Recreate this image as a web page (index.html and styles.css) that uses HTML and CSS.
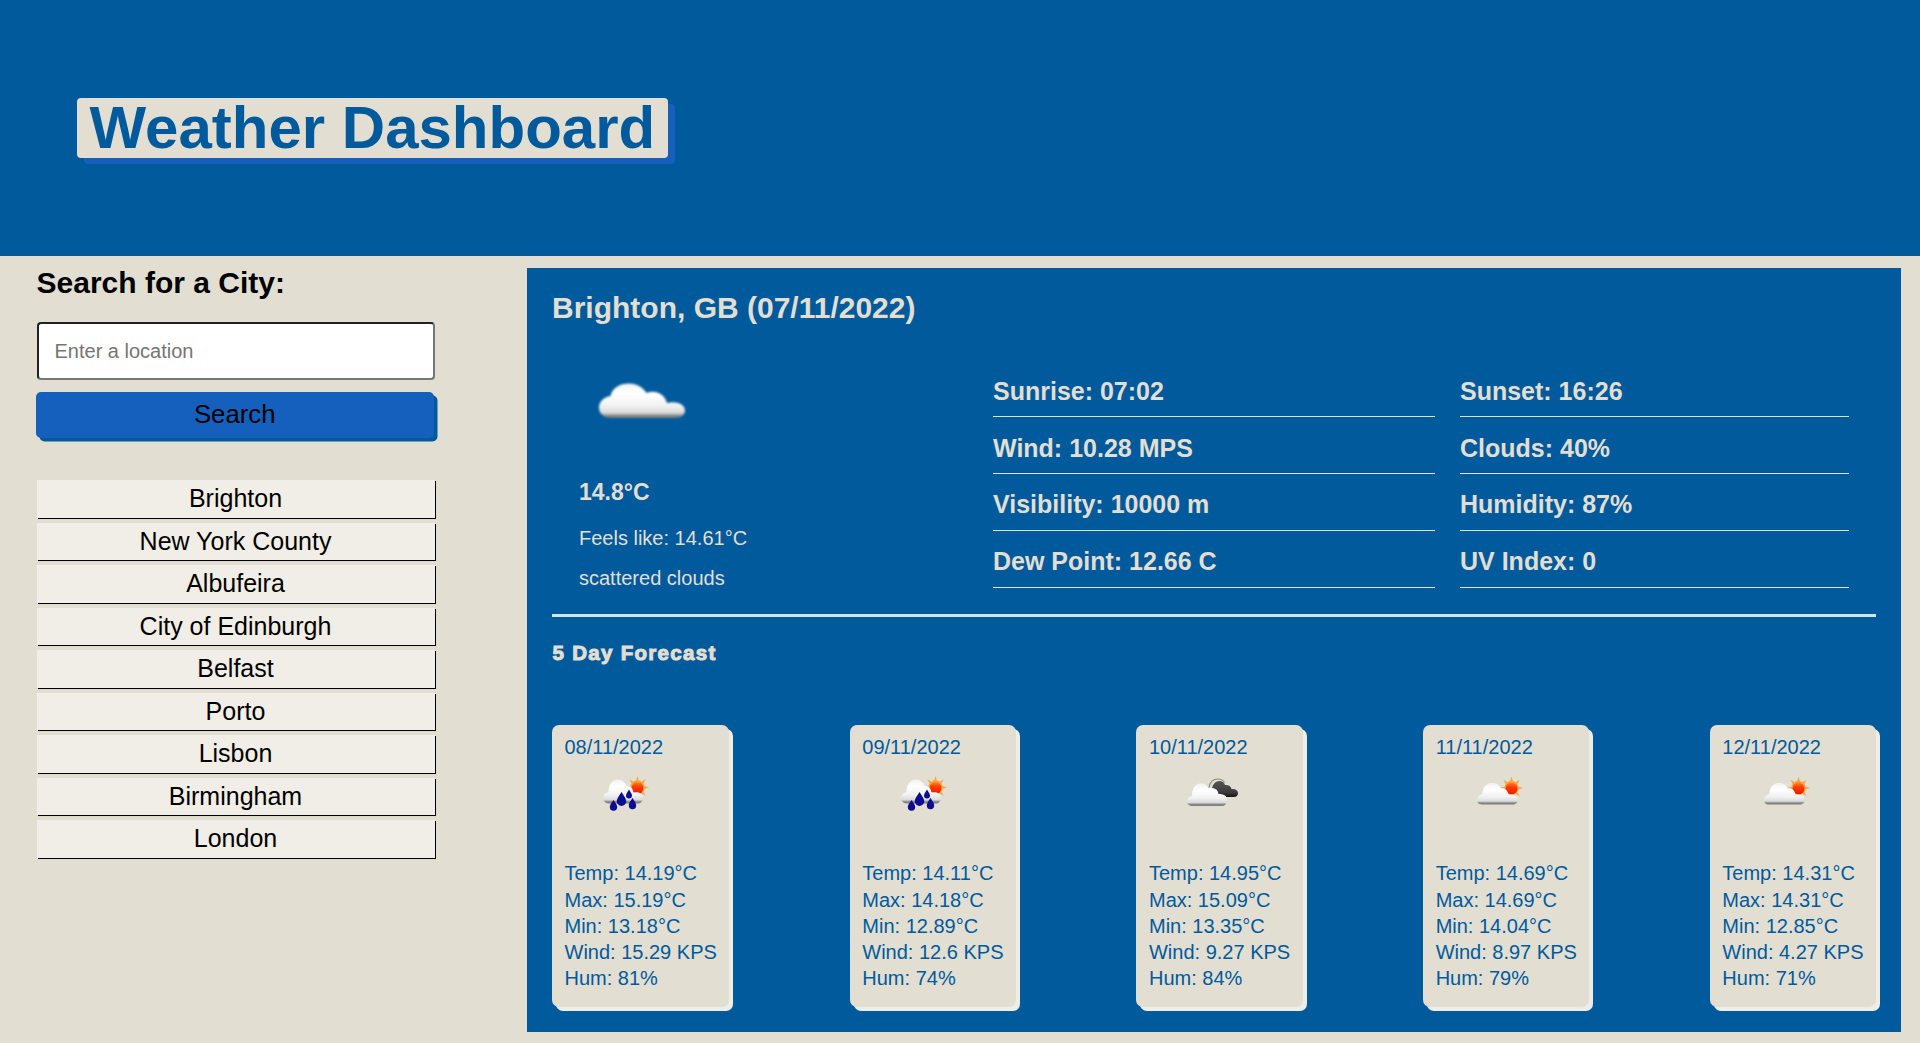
FILE: index.html
```html
<!DOCTYPE html>
<html lang="en">
<head>
<meta charset="utf-8">
<title>Weather Dashboard</title>
<link rel="stylesheet" href="styles.css">
</head>
<body>
<svg class="sprite" width="0" height="0" aria-hidden="true">
  <defs>
    <linearGradient id="cloudFill" x1="0" y1="0" x2="0" y2="1">
      <stop offset="0" stop-color="#f2f2f2"/><stop offset=".3" stop-color="#fff"/><stop offset=".65" stop-color="#f1f1f1"/><stop offset=".85" stop-color="#dadada"/><stop offset=".92" stop-color="#8f8f8f"/><stop offset="1" stop-color="#777"/>
    </linearGradient>
    <linearGradient id="darkFill" x1="0" y1="0" x2="0" y2="1">
      <stop offset="0" stop-color="#555"/><stop offset=".7" stop-color="#3c3c3c"/><stop offset="1" stop-color="#151515"/>
    </linearGradient>
    <linearGradient id="sunFill" x1="0" y1="0" x2="0" y2="1">
      <stop offset="0" stop-color="#ff8a14"/><stop offset=".4" stop-color="#ff3a08"/><stop offset="1" stop-color="#f01800"/>
    </linearGradient>
    <filter id="soft" x="-10%" y="-10%" width="120%" height="120%"><feGaussianBlur stdDeviation=".45"/></filter>
    <filter id="softer" x="-10%" y="-10%" width="120%" height="120%"><feGaussianBlur stdDeviation=".9"/></filter>
    <symbol id="sun" viewBox="0 0 24 24">
      <path fill="#f3a548" d="M12 0l1.500 5h-3zM20.500 3.500l-2.500 4.500-2-2zM24 12l-5 1.500v-3zM20.500 20.500l-4.500-2.500 2-2zM12 24l-1.500-5h3zM3.500 20.500l2.500-4.500 2 2zM0 12l5-1.500v3zM3.500 3.500l4.500 2.500-2 2z"/>
      <circle cx="12" cy="12" r="7.500" fill="#f9a23a"/><circle cx="12" cy="12.500" r="6.200" fill="url(#sunFill)"/>
    </symbol>
    <symbol id="few" viewBox="0 0 56 40">
      <g filter="url(#soft)">
        <use href="#sun" x="28" y="1.500" width="23" height="23"/>
        <path fill="url(#cloudFill)" d="M10 29.500C6 29.500 4.500 26.500 5 24c.5-2.500 3-4.500 5.500-5C10.500 13 13.500 8 19.500 8c5 0 8 2 9 5.500 4-1 7 1.500 8 6 5-.5 9.500 1.500 9.500 5 0 3.500-2.500 5-5.500 5z"/>
      </g>
    </symbol>
    <symbol id="rain" viewBox="0 0 56 40">
      <g filter="url(#soft)">
        <use href="#sun" x="25" y="1" width="23" height="23"/>
        <path fill="url(#cloudFill)" d="M8 28.500C4 28.500 1.500 25.500 2 22c.5-2.500 3-4.500 5.500-5C7.500 10 11 4.500 17 4.500c4.500 0 7.500 3 8.500 6.500 4-.5 6.500 2.500 7 6.500 5-1 9 1 9.500 5 0 4-2.500 6-5.500 6z"/>
        <path fill="#0a0a92" d="M20.500 17c3.200 5 4.700 7 4.700 9.300a4.700 4.700 0 0 1-9.400 0c0-2.300 1.500-4.300 4.700-9.300zM28 14.500c2 3.500 3 4.800 3 6.100a3 3 0 0 1-6 0c0-1.300 1-2.600 3-6.100zM31.500 23c2.600 4 3.700 5.800 3.700 7.500a3.700 3.700 0 0 1-7.400 0c0-1.700 1.100-3.500 3.700-7.500zM12.500 25c2.600 3.700 3.700 5.300 3.700 7a3.700 3.700 0 0 1-7.400 0c0-1.700 1.100-3.300 3.700-7z"/>
      </g>
    </symbol>
    <symbol id="broken" viewBox="0 0 56 40">
      <g filter="url(#soft)">
        <path fill="none" stroke="#8b8b86" stroke-width="1.200" d="M24 12.500c1-6 5-8.500 9-8.500 3.500 0 5.500 1.500 6.500 3.500"/>
        <path fill="url(#darkFill)" d="M27 15c0-5 3-9 7.500-9 3 0 5 2 5.500 4 3-.5 6 1 6.500 4 4-.5 6.500 1.500 6.500 4s-1.500 4-4 4H36z"/>
        <path fill="url(#cloudFill)" d="M7.500 31C3.500 31 1.500 28.500 2 25.500c.5-2.500 2.500-4 5-4.500C7 13.500 10.500 8.500 15.500 8.500c4 0 6.500 1.500 8 5 5.500-1.500 9.500 1 10 5.500 5 0 8.500 1.500 8.500 6 0 4-2.500 6-5 6z"/>
      </g>
    </symbol>
  </defs>
</svg>

<header class="banner"><h1 class="banner-title">Weather Dashboard</h1></header>

<div class="page">
  <aside class="sidebar">
    <h2 class="search-title">Search for a City:</h2>
    <input class="search-input" type="text" placeholder="Enter a location">
    <button class="search-button">Search</button>
    <div class="history">
      <button class="history-item">Brighton</button>
      <button class="history-item">New York County</button>
      <button class="history-item">Albufeira</button>
      <button class="history-item">City of Edinburgh</button>
      <button class="history-item">Belfast</button>
      <button class="history-item">Porto</button>
      <button class="history-item">Lisbon</button>
      <button class="history-item">Birmingham</button>
      <button class="history-item">London</button>
    </div>
  </aside>

  <main class="weather">
    <h2 class="city">Brighton, GB (07/11/2022)</h2>
    <section class="today">
      <div class="current">
        <svg class="current-icon" viewBox="0 0 125 125">
          <path filter="url(#softer)" fill="url(#cloudFill)" d="M34 80C26 80 22 75 22 69.500c0-6 5-10.500 11.500-11.500C35 50 43 45.500 52 45.500c8 0 14 4 17.500 9.500 9-3.500 18 1 20.500 10 9-2.500 18 1 18 7.500 0 4.500-4 7.500-9 7.500z"/>
        </svg>
        <p class="temp">14.8°C</p>
        <p class="detail">Feels like: 14.61°C</p>
        <p class="detail">scattered clouds</p>
      </div>
      <ul class="stats stats-left"><li>Sunrise: 07:02</li><li>Wind: 10.28 MPS</li><li>Visibility: 10000 m</li><li>Dew Point: 12.66 C</li></ul>
      <ul class="stats stats-right"><li>Sunset: 16:26</li><li>Clouds: 40%</li><li>Humidity: 87%</li><li>UV Index: 0</li></ul>
    </section>
    <h3 class="forecast-title">5 Day Forecast</h3>
    <section class="forecast">
      <article class="card"><p>08/11/2022</p><svg class="card-icon"><use href="#rain"/></svg><p>Temp: 14.19°C</p><p>Max: 15.19°C</p><p>Min: 13.18°C</p><p>Wind: 15.29 KPS</p><p>Hum: 81%</p></article>
      <article class="card"><p>09/11/2022</p><svg class="card-icon"><use href="#rain"/></svg><p>Temp: 14.11°C</p><p>Max: 14.18°C</p><p>Min: 12.89°C</p><p>Wind: 12.6 KPS</p><p>Hum: 74%</p></article>
      <article class="card"><p>10/11/2022</p><svg class="card-icon"><use href="#broken"/></svg><p>Temp: 14.95°C</p><p>Max: 15.09°C</p><p>Min: 13.35°C</p><p>Wind: 9.27 KPS</p><p>Hum: 84%</p></article>
      <article class="card"><p>11/11/2022</p><svg class="card-icon"><use href="#few"/></svg><p>Temp: 14.69°C</p><p>Max: 14.69°C</p><p>Min: 14.04°C</p><p>Wind: 8.97 KPS</p><p>Hum: 79%</p></article>
      <article class="card"><p>12/11/2022</p><svg class="card-icon"><use href="#few"/></svg><p>Temp: 14.31°C</p><p>Max: 14.31°C</p><p>Min: 12.85°C</p><p>Wind: 4.27 KPS</p><p>Hum: 71%</p></article>
    </section>
  </main>
</div>
</body>
</html>
```
FILE: styles.css
```css
* { box-sizing: border-box; margin: 0; padding: 0; }

body {
  background: #e2dfd2;
  color: #000;
  font-family: "Liberation Sans", Arial, sans-serif;
  font-size: 20px;
}

.sprite { display: block; }

.banner {
  display: flex;
  align-items: center;
  height: 256px;
  padding-left: 77px;
  background: #005a9c;
}

.banner-title {
  padding: 0 12.5px;
  border-radius: 4px;
  background: #e2dfd2;
  box-shadow: 7px 6px #1560bd;
  color: #005a9c;
  font-size: 60px;
  line-height: 60px;
}

.page {
  display: grid;
  grid-template-columns: 398px 1374px;
  column-gap: 92px;
  align-items: start;
  padding: 9px 19px 11px 37px;
}

.sidebar { display: flex; flex-direction: column; }

.search-title { margin-bottom: 22px; margin-left: -.5px; font-size: 30px; line-height: 35px; }

.search-input {
  height: 58px;
  padding: 0 15.5px;
  border: 2px inset #767676;
  border-radius: 4px;
  background: #fff;
  font: 20px "Liberation Sans", Arial, sans-serif;
}

.search-input::placeholder { color: #757575; }

.search-button {
  height: 46px;
  margin: 12px 1.5px 0 -1px;
  padding-bottom: 1.5px;
  border: 0;
  border-radius: 5px;
  background: #1560bd;
  box-shadow: 3.5px 3.5px #005a9c;
  font: 25.8px "Liberation Sans", Arial, sans-serif;
}

.history { display: grid; gap: 5px; margin-top: 42px; }

.history-item {
  height: 37.5px;
  padding: 0 1px 1.5px 0;
  border: 0;
  background: #f0eee6;
  box-shadow: 1px .5px .5px #000;
  font: 25px/28px "Liberation Sans", Arial, sans-serif;
}

.weather {
  height: 764px;
  margin-top: 3px;
  padding: 22px 25px 25px;
  background: #005a9c;
  color: #e2dfd2;
}

.city { font-size: 30px; line-height: 35px; }

.today {
  display: grid;
  grid-template-columns: 416px 442px 389px;
  column-gap: 25px;
  align-items: start;
  height: 292px;
  border-bottom: 3px solid #d3e4ec;
}

.current { padding: 13px 0 0 27px; }
.current-icon { display: block; width: 125px; height: 125px; margin-left: -2px; }
.temp { margin: 16px 0 21px; font-size: 23px; font-weight: bold; line-height: 27px; }
.detail { margin-bottom: 17px; line-height: 23px; }

.stats { padding-top: 35px; list-style: none; font-size: 25px; font-weight: bold; line-height: 29px; }
.stats li { padding: 17px 0 10px; border-bottom: 1px solid #d8e3e4; }
.stats li:nth-child(n+3) { padding: 16px 0 11px; }

.forecast-title {
  margin: 24px 0 61px;
  padding-left: .5px;
  font-size: 20.5px;
  line-height: 23px;
  letter-spacing: 1.3px;
  -webkit-text-stroke: 1px #e2dfd2;
}

.forecast { display: flex; justify-content: space-between; }

.card {
  height: 282px;
  padding: 9px 12.5px;
  border-radius: 7px;
  background: #e2dfd2;
  box-shadow: 4px 4px #eeeee9;
  color: #005a9c;
  line-height: 26.25px;
}

.card-icon { display: block; width: 56px; height: 40px; margin: 15px 0 45px 36.5px; }
```
